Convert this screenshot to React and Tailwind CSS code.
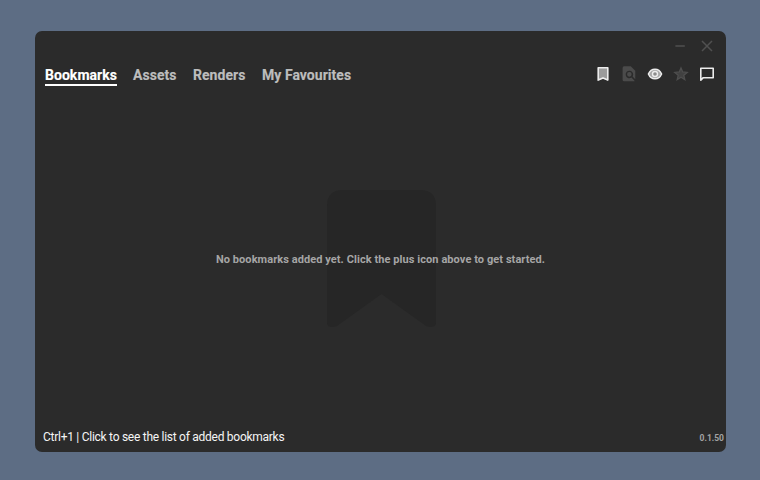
import React from "react";

const tabs = [
  { name: "Bookmarks", width: "w-[72px]", active: true },
  { name: "Assets", width: "w-[44px]" },
  { name: "Renders", width: "w-[53px]" },
  { name: "My Favourites", width: "w-[90px]" },
];

function TitleBar() {
  return (
    <div className="flex h-[30px] shrink-0 items-center justify-end gap-[15px] pr-[13px] text-[#505050]">
      <svg className="h-3 w-3" viewBox="0 0 12 12" stroke="currentColor" strokeWidth="1.6" fill="none">
        <path d="M1.4 6H10.8" />
      </svg>
      <svg className="h-3 w-3" viewBox="0 0 12 12" stroke="currentColor" strokeWidth="1.5" fill="none">
        <path d="M1 1L11 11M11 1L1 11" />
      </svg>
    </div>
  );
}

function Toolbar() {
  return (
    <div className="flex items-center gap-[10px] pb-[2px]">
      <svg className="h-4 w-4" viewBox="0 0 16 16">
        <path d="M3.2 1.7H12.8V14.1L8 11.9L3.2 14.1Z" fill="#9b9b9b" stroke="#ececec" strokeWidth="1.6" strokeLinejoin="round" />
      </svg>
      <svg className="h-4 w-4" viewBox="1 1 22 23" fill="#4b4b4b">
        <path d="M21 20.2V8l-6.5-6.5H5A2.2 2.2 0 0 0 2.8 3.7v17A2.2 2.2 0 0 0 5 22.9h14c.5 0 .9-.15 1.3-.4l-4.8-4.8a5.4 5.4 0 1 1 1.7-1.7l3.8 4.2zM9.2 13a3.3 3.3 0 1 0 6.6 0 3.3 3.3 0 0 0-6.6 0z" />
      </svg>
      <svg className="h-4 w-4" viewBox="0 0 16 16">
        <path d="M1.4 8C2.7 5 5.2 3.2 8 3.2S13.3 5 14.6 8C13.3 11 10.8 12.8 8 12.8S2.7 11 1.4 8Z" fill="#a8a8a8" stroke="#ececec" strokeWidth="1.5" />
        <circle cx="8" cy="8" r="2.5" fill="#8c8c8c" stroke="#ececec" strokeWidth="1.4" />
      </svg>
      <svg className="h-4 w-4" viewBox="0 0 16 16">
        <path d="M8 2L9.7 6L14.2 6.4L10.8 9.3L11.8 13.6L8 11.3L4.2 13.6L5.2 9.3L1.8 6.4L6.3 6Z" fill="#414141" stroke="#4e4e4e" strokeWidth="1.3" />
      </svg>
      <svg className="h-4 w-4" viewBox="0 0 16 16">
        <path d="M1.8 2.2H14.2V11.7H4.3L1.8 14.1Z" fill="none" stroke="#ececec" strokeWidth="1.6" strokeLinejoin="round" />
      </svg>
    </div>
  );
}

export default function App() {
  return (
    <div className="h-[480px] w-[760px] overflow-hidden bg-[#5d6d84] pl-[35px] pt-[31px] font-['Roboto',sans-serif]">
      <main className="flex h-[421px] w-[691px] flex-col overflow-hidden rounded-[7px] bg-[#2b2b2b]">
        <TitleBar />
        <header className="flex h-[28px] shrink-0 items-center justify-between pl-[10px] pr-[11px]">
          <nav className="flex gap-4 pt-px">
            {tabs.map((tab) => (
              <button
                key={tab.name}
                className={`h-[21px] border-b-2 text-left text-[14px] leading-[18px] font-bold tracking-[0.04px] whitespace-nowrap [-webkit-text-stroke:0.15px] ${tab.width} ${
                  tab.active ? "border-white text-white" : "border-transparent text-[#bdbdbd]"
                }`}
              >
                {tab.name}
              </button>
            ))}
          </nav>
          <Toolbar />
        </header>
        <section className="grid flex-1 place-items-center pt-[6px]">
          <svg className="col-start-1 row-start-1 ml-[2px] h-[137px] w-[109px]" viewBox="0 0 109 137">
            <path d="M16 0H93Q109 0 109 16V133Q109 137 103 137L99 136L54.5 104L10 136L6 137Q0 137 0 133V16Q0 0 16 0Z" fill="#262626" />
          </svg>
          <p className="col-start-1 row-start-1 pt-[2px] text-[11px] leading-4 font-bold tracking-[0.07px] whitespace-nowrap text-[#a5a5a5]">
            No bookmarks added yet. Click the plus icon above to get started.
          </p>
        </section>
        <footer className="flex h-[30px] shrink-0 items-center justify-between pl-2 pr-[2px]">
          <span className="text-[12px] leading-4 tracking-[-0.27px] text-[#f5f5f5]">Ctrl+1 | Click to see the list of added bookmarks</span>
          <span className="pt-px text-[8.5px] leading-4 font-bold text-[#a3a3a3]">0.1.50</span>
        </footer>
      </main>
    </div>
  );
}
